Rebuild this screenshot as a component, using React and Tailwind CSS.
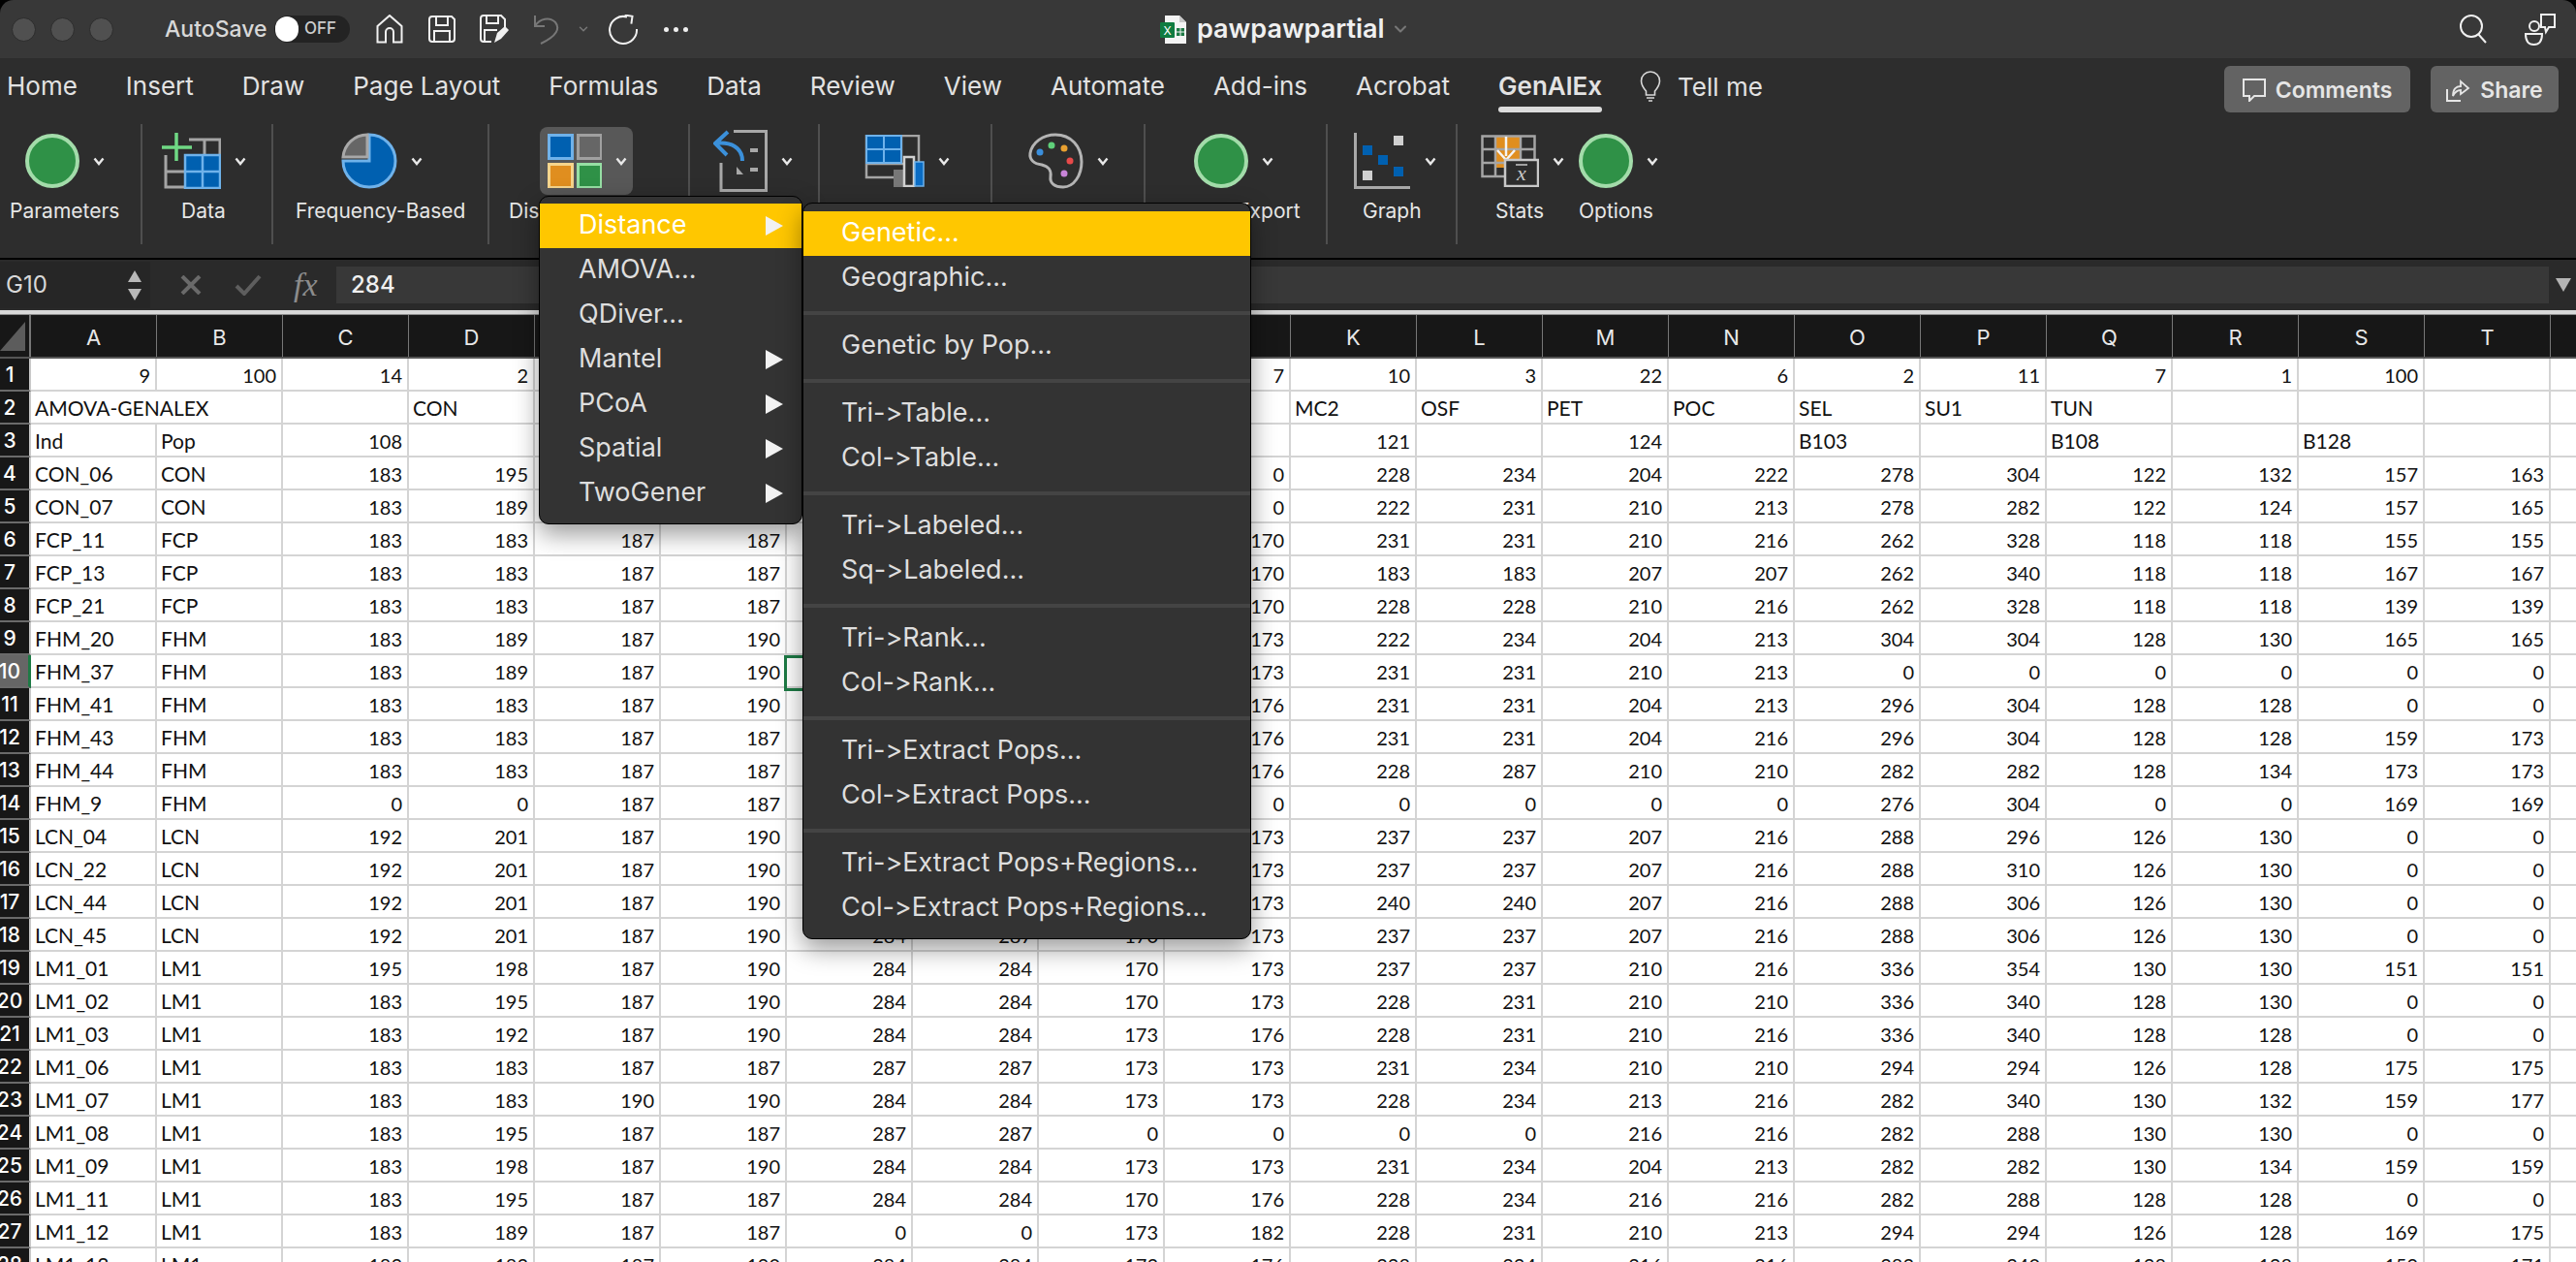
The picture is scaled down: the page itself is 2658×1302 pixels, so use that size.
import React from 'react';
import { ChevronDown } from 'lucide-react';

const tabs = ['Home', 'Insert', 'Draw', 'Page Layout', 'Formulas', 'Data', 'Review', 'View', 'Automate', 'Add-ins', 'Acrobat', 'GenAlEx'];
const columns = 'ABCDEFGHIJKLMNOPQRST'.split('');

// "-" is an empty cell; cells under the two menus are left empty
const sheet = [
  '9 100 14 2 - - - - - 7 10 3 22 6 2 11 7 1 100 -',
  'AMOVA-GENALEX - - CON - - - - - - MC2 OSF PET POC SEL SU1 TUN - - -',
  'Ind Pop 108 - - - - - - - 121 - 124 - B103 - B108 - B128 -',
  'CON_06 CON 183 195 - - - - - 0 228 234 204 222 278 304 122 132 157 163',
  'CON_07 CON 183 189 - - - - - 0 222 231 210 213 278 282 122 124 157 165',
  'FCP_11 FCP 183 183 187 187 - - - 170 231 231 210 216 262 328 118 118 155 155',
  'FCP_13 FCP 183 183 187 187 - - - 170 183 183 207 207 262 340 118 118 167 167',
  'FCP_21 FCP 183 183 187 187 - - - 170 228 228 210 216 262 328 118 118 139 139',
  'FHM_20 FHM 183 189 187 190 - - - 173 222 234 204 213 304 304 128 130 165 165',
  'FHM_37 FHM 183 189 187 190 284 - - 173 231 231 210 213 0 0 0 0 0 0',
  'FHM_41 FHM 183 183 187 190 - - - 176 231 231 204 213 296 304 128 128 0 0',
  'FHM_43 FHM 183 183 187 187 - - - 176 231 231 204 216 296 304 128 128 159 173',
  'FHM_44 FHM 183 183 187 187 - - - 176 228 287 210 210 282 282 128 134 173 173',
  'FHM_9 FHM 0 0 187 187 - - - 0 0 0 0 0 276 304 0 0 169 169',
  'LCN_04 LCN 192 201 187 190 - - - 173 237 237 207 216 288 296 126 130 0 0',
  'LCN_22 LCN 192 201 187 190 - - - 173 237 237 207 216 288 310 126 130 0 0',
  'LCN_44 LCN 192 201 187 190 - - - 173 240 240 207 216 288 306 126 130 0 0',
  'LCN_45 LCN 192 201 187 190 284 287 170 173 237 237 207 216 288 306 126 130 0 0',
  'LM1_01 LM1 195 198 187 190 284 284 170 173 237 237 210 216 336 354 130 130 151 151',
  'LM1_02 LM1 183 195 187 190 284 284 170 173 228 231 210 210 336 340 128 130 0 0',
  'LM1_03 LM1 183 192 187 190 284 284 173 176 228 231 210 216 336 340 128 128 0 0',
  'LM1_06 LM1 183 183 187 187 287 287 173 173 231 234 210 210 294 294 126 128 175 175',
  'LM1_07 LM1 183 183 190 190 284 284 173 173 228 234 213 216 282 340 130 132 159 177',
  'LM1_08 LM1 183 195 187 187 287 287 0 0 0 0 216 216 282 288 130 130 0 0',
  'LM1_09 LM1 183 198 187 190 284 284 173 173 231 234 204 213 282 282 130 134 159 159',
  'LM1_11 LM1 183 195 187 187 284 284 170 176 228 234 216 216 282 288 128 128 0 0',
  'LM1_12 LM1 183 189 187 187 0 0 173 182 228 231 210 213 294 294 126 128 169 175',
  'LM1_13 LM1 183 183 187 190 284 284 173 176 228 234 216 216 282 340 128 128 159 171',
].map(row => row.split(' '));

const firstMenu = [
  { label: 'Distance', arrow: true, active: true },
  { label: 'AMOVA...' },
  { label: 'QDiver...' },
  { label: 'Mantel', arrow: true },
  { label: 'PCoA', arrow: true },
  { label: 'Spatial', arrow: true },
  { label: 'TwoGener', arrow: true },
];

const secondMenu = [
  ['Genetic...', 'Geographic...'],
  ['Genetic by Pop...'],
  ['Tri->Table...', 'Col->Table...'],
  ['Tri->Labeled...', 'Sq->Labeled...'],
  ['Tri->Rank...', 'Col->Rank...'],
  ['Tri->Extract Pops...', 'Col->Extract Pops...'],
  ['Tri->Extract Pops+Regions...', 'Col->Extract Pops+Regions...'],
];

const Chevron = () => (
  <svg width="12" height="9" viewBox="0 0 12 9" className="shrink-0">
    <path d="M1.5 1.5 L6 7 L10.5 1.5" fill="none" stroke="#e8e8e8" strokeWidth="2.4" />
  </svg>
);

const GreenDot = () => (
  <svg width="56" height="56" viewBox="0 0 56 56">
    <circle cx="28" cy="28" r="26" fill="#2f9147" stroke="#a3dcaa" strokeWidth="4" />
  </svg>
);

const DataIcon = () => (
  <svg width="61" height="58" viewBox="0 0 61 58">
    <path d="M4 23V56H60V7H28" fill="none" stroke="#a5a5a5" strokeWidth="3" />
    <path d="M4 40H24M44 7V23" stroke="#a5a5a5" strokeWidth="3" />
    <rect x="24" y="23" width="36" height="34" fill="#0060b0" stroke="#6fb2ea" strokeWidth="2.5" />
    <path d="M42 23V57M24 40H60" stroke="#6fb2ea" strokeWidth="2.5" />
    <path d="M15 0V29M0 15H31" stroke="#6fd884" strokeWidth="3.5" />
  </svg>
);

const PieIcon = () => (
  <svg width="58" height="58" viewBox="0 0 58 58">
    <path d="M29 2A27 27 0 1 1 2 29H29Z" fill="#0060b0" stroke="#6fb2ea" strokeWidth="3" />
    <path d="M2 25A25 25 0 0 1 27 2V25Z" fill="#666666" stroke="#a8a8a8" strokeWidth="3" />
  </svg>
);

const QuadIcon = () => (
  <svg width="56" height="56" viewBox="0 0 56 56">
    <rect x="1.5" y="1.5" width="24" height="24" fill="#0060b0" stroke="#6fb2ea" strokeWidth="3" />
    <rect x="31.5" y="1.5" width="24" height="24" fill="#666666" stroke="#a0a0a0" strokeWidth="3" />
    <rect x="1.5" y="31.5" width="24" height="24" fill="#e08e1f" stroke="#f6d58c" strokeWidth="3" />
    <rect x="31.5" y="31.5" width="24" height="24" fill="#2f9147" stroke="#96dfa4" strokeWidth="3" />
  </svg>
);

const ImportIcon = () => (
  <svg width="56" height="64" viewBox="0 0 56 64">
    <path d="M21 1.5H54.5V62.5H8V34" fill="none" stroke="#a8a8a8" strokeWidth="3" />
    <path d="M38 21H46M38 41H46" stroke="#a8a8a8" strokeWidth="4" />
    <path d="M24 46V38L31 46Z" fill="#a8a8a8" />
    <path d="M15 2L2 14L14 26M2 14C18 12 30 18 30 32" fill="none" stroke="#3b90da" strokeWidth="4" />
  </svg>
);

const TableBarsIcon = () => (
  <svg width="62" height="54" viewBox="0 0 62 54">
    <path d="M2 1H56V44H2Z" fill="none" stroke="#a5a5a5" strokeWidth="2.5" />
    <path d="M2 30H40M38 1V30" stroke="#a5a5a5" strokeWidth="2.5" />
    <rect x="2" y="1" width="36" height="28" fill="#0060b0" stroke="#6fb2ea" strokeWidth="2" />
    <path d="M20 1V29M2 15H38" stroke="#6fb2ea" strokeWidth="2" />
    <rect x="30" y="36" width="11" height="18" fill="#777777" />
    <rect x="41" y="23" width="10" height="30" fill="#2d2d2d" stroke="#d0d0d0" strokeWidth="2.5" />
    <rect x="52" y="28" width="9" height="25" fill="#0a6cc4" stroke="#6fb2ea" strokeWidth="1.5" />
  </svg>
);

const PaletteIcon = () => (
  <svg width="58" height="58" viewBox="0 0 58 58">
    <path d="M29 2C45 2 56 14 56 30C56 44 48 56 37 56C28 56 23 52 24 45C25 38 22 35 15 33C7 32 2 28 3 21C5 10 16 2 29 2Z" fill="none" stroke="#b4b4b4" strokeWidth="3" />
    <circle cx="13" cy="20" r="3.5" fill="#3b8fdc" />
    <circle cx="25" cy="13" r="3.5" fill="#5fd07a" />
    <circle cx="38" cy="16" r="3.5" fill="#e8a030" />
    <circle cx="44" cy="29" r="3.5" fill="#e84a4a" />
    <circle cx="38" cy="42" r="3.5" fill="#c884d8" />
  </svg>
);

const GraphIcon = () => (
  <svg width="59" height="58" viewBox="0 0 59 58">
    <path d="M1.5 0V56.5H58" fill="none" stroke="#a8a8a8" strokeWidth="3" />
    <rect x="41" y="3" width="10" height="10" fill="#d0d0d0" />
    <rect x="9" y="13" width="10" height="10" fill="#0060b0" />
    <rect x="25" y="23" width="10" height="10" fill="#0060b0" />
    <rect x="41" y="35" width="10" height="10" fill="#0060b0" />
    <rect x="9" y="39" width="10" height="10" fill="#d0d0d0" />
  </svg>
);

const StatsIcon = () => (
  <svg width="60" height="54" viewBox="0 0 60 54">
    <rect x="15" y="1" width="26" height="33" fill="#e08e1f" />
    <path d="M1.5 1.5H55.5V43H1.5ZM15 1.5V43M41 1.5V30M1.5 15H55M1.5 29H24" fill="none" stroke="#a5a5a5" strokeWidth="2.5" />
    <path d="M26 2V22M17 16L26 26L35 16" fill="none" stroke="#f4f4f4" strokeWidth="2.5" />
    <rect x="25" y="26" width="34" height="27" fill="#2d2d2d" stroke="#c8c8c8" strokeWidth="2.5" />
    <text x="42" y="47" textAnchor="middle" fontFamily="'Liberation Serif', serif" fontStyle="italic" fontSize="22" fill="#c8c8c8">x</text>
    <path d="M36 31H48" stroke="#c8c8c8" strokeWidth="1.5" />
  </svg>
);

const ExcelIcon = () => (
  <svg width="27" height="31" viewBox="0 0 27 31">
    <path d="M5 1H20L27 8V30H5Z" fill="#f4f4f4" />
    <path d="M20 1V8H27Z" fill="#c8c8c8" />
    <rect x="17" y="14" width="8" height="8" fill="#1d7a45" />
    <path d="M21 14V22M17 18H25" stroke="#f4f4f4" strokeWidth="1" />
    <rect x="0" y="8" width="15" height="16" rx="1" fill="#107c41" />
    <text x="7.5" y="21" textAnchor="middle" fontFamily="Inter, sans-serif" fontSize="12" fill="#ffffff">X</text>
  </svg>
);

// ribbon group, the classes place the icon and the label inside the group
const RibbonGroup = ({ width, iconPad, labelClass, label, icon, highlight, noChevron, border = true }) => (
  <div className={`${width} h-[124px] shrink-0 flex flex-col ${border ? 'border-r-2 border-[#4f4f4f]' : ''}`}>
    <div className={`h-[76px] flex items-center ${iconPad}`}>
      <div className={`flex items-center h-[70px] ${highlight ? 'bg-[#585858] rounded-lg pl-[8px] pr-[6px]' : ''}`}>
        {icon}
        {!noChevron && <div className="ml-[14px]"><Chevron /></div>}
      </div>
    </div>
    <div className={`h-[28px] leading-[28px] text-[21px] text-[#e6e6e6] whitespace-nowrap ${labelClass}`}>{label}</div>
  </div>
);

const MenuArrow = () => (
  <svg width="18" height="20" viewBox="0 0 18 20">
    <path d="M0 0L18 10L0 20Z" fill="#f2f2f2" />
  </svg>
);

const MenuItem = ({ label, arrow, active, pad }) => (
  <div className={`h-[46px] flex items-center justify-between ${pad} pr-[19px] text-[27px] [font-feature-settings:'calt'_0,'liga'_0] ${active ? 'bg-[#ffc700] text-white' : 'text-[#dedede]'}`}>
    <span className="whitespace-nowrap -mt-[1px]">{label}</span>
    {arrow && <MenuArrow />}
  </div>
);

const isNumber = (v) => /^\d+$/.test(v);

const Sheet = () => (
  <div className="flex-1 overflow-hidden bg-white font-[Lato,sans-serif]">
    <div className="flex h-[45px] bg-[#171717] border-b-2 border-[#555555]">
      <div className="w-[32px] shrink-0 flex items-end justify-start pb-[6px] border-r-2 border-[#777777]">
        <svg width="26" height="30" viewBox="0 0 26 30"><path d="M26 0V30H0Z" fill="#5c5c5c" /></svg>
      </div>
      {columns.map(col => (
        <div key={col} className="w-[130px] shrink-0 flex items-center justify-center pt-[3px] border-r border-[#777777] text-[22px] text-[#e8e8e8] font-[Inter,sans-serif]">
          {col}
        </div>
      ))}
      <div className="flex-1" />
    </div>
    {sheet.map((row, r) => (
      <div key={r} className="flex h-[34px]">
        <div className={`w-[32px] shrink-0 border-b-2 border-[#6a6a6a] text-[21px] leading-[33px] text-white font-[Inter,sans-serif] font-medium ${r === 9 ? 'bg-[#666666] border-r-[3px] border-r-[#1d7a45]' : 'bg-[#171717] border-r-2 border-r-[#c8c8c8]'}`}>
          <div className="w-[20px] flex justify-center">{r + 1}</div>
        </div>
        {row.map((cell, c) => (
          <div
            key={c}
            className={`w-[130px] shrink-0 border-b-2 border-[#d4d4d4] whitespace-nowrap leading-[34px] text-[#111111] ${r === 1 && c === 0 ? '' : 'border-r-2'} ${isNumber(cell) ? 'text-[20px] text-right pr-[5px]' : 'text-[21px] text-left pl-[4px]'}`}
          >
            {cell === '-' ? '' : cell}
          </div>
        ))}
        <div className="flex-1 border-b-2 border-[#d4d4d4]" />
      </div>
    ))}
  </div>
);

export default function App() {
  return (
    <div className="relative w-[2658px] h-[1302px] overflow-hidden bg-black flex flex-col font-[Inter,sans-serif]">
      {/* title bar */}
      <div className="h-[60px] shrink-0 rounded-t-[14px] bg-[#383838] flex items-center pl-[12px]">
        <div className="flex items-center gap-[15px]">
          <div className="w-[25px] h-[25px] rounded-full bg-[#505050] border border-[#2c2c2c]" />
          <div className="w-[25px] h-[25px] rounded-full bg-[#505050] border border-[#2c2c2c]" />
          <div className="w-[25px] h-[25px] rounded-full bg-[#505050] border border-[#2c2c2c]" />
        </div>
        <span className="ml-[53px] w-[105px] text-[23px] text-[#d8d8d8] font-medium">AutoSave</span>
        <div className="ml-[8px] w-[78px] h-[28px] rounded-full bg-[#232323] flex items-center">
          <div className="ml-[1px] w-[24px] h-[26px] rounded-full bg-white" />
          <span className="ml-[6px] text-[17px] text-[#cccccc] font-medium">OFF</span>
        </div>
        <svg className="ml-[27px]" width="28" height="30" viewBox="0 0 28 30">
          <path d="M14 1L1.5 12V28.5H10V18A4 4 0 0 1 18 18V28.5H26.5V12Z" fill="none" stroke="#f0f0f0" strokeWidth="2" />
        </svg>
        <svg className="ml-[26px]" width="28" height="28" viewBox="0 0 28 28">
          <path d="M4 1H24L27 4V24Q27 27 24 27H4Q1 27 1 24V4Q1 1 4 1ZM8 1V10H20V1M6 27V16H22V27" fill="none" stroke="#f0f0f0" strokeWidth="2" />
        </svg>
        <svg className="ml-[25px]" width="30" height="30" viewBox="0 0 30 30">
          <path d="M12 28H4Q1 28 1 25V4Q1 1 4 1H22L26 5V13M7 1V9H19V1M5 28V16H18" fill="none" stroke="#f0f0f0" strokeWidth="2" />
          <path d="M15 29L18 19L26 12L30 16L22 25Z" fill="#f0f0f0" />
        </svg>
        <svg className="ml-[26px]" width="26" height="31" viewBox="0 0 26 31">
          <path d="M1 1V12H11M1 12C6 4 16 2 22 8C27 14 24 22 7 30" fill="none" stroke="#777777" strokeWidth="2" />
        </svg>
        <ChevronDown className="ml-[18px] text-[#777777]" size={14} strokeWidth={2.5} />
        <svg className="ml-[18px]" width="32" height="31" viewBox="0 0 32 31">
          <path d="M20 2.5A14 14 0 1 0 30 15" fill="none" stroke="#f0f0f0" strokeWidth="2" />
          <path d="M17 1H25V9" fill="none" stroke="#f0f0f0" strokeWidth="2" transform="rotate(8 20 5)" />
        </svg>
        <div className="ml-[26px] flex gap-[5px]">
          <div className="w-[5px] h-[5px] rounded-full bg-[#f0f0f0]" />
          <div className="w-[5px] h-[5px] rounded-full bg-[#f0f0f0]" />
          <div className="w-[5px] h-[5px] rounded-full bg-[#f0f0f0]" />
        </div>
        <div className="ml-[487px]"><ExcelIcon /></div>
        <span className="ml-[11px] text-[27px] font-semibold text-[#f0f0f0]">pawpawpartial</span>
        <ChevronDown className="ml-[6px] text-[#777777]" size={20} strokeWidth={2.5} />
        <svg className="ml-auto" width="28" height="30" viewBox="0 0 28 30">
          <circle cx="12" cy="12" r="11" fill="none" stroke="#f0f0f0" strokeWidth="2" />
          <path d="M19 20L27 29" stroke="#f0f0f0" strokeWidth="2" />
        </svg>
        <svg className="ml-[38px] mr-[21px]" width="33" height="33" viewBox="0 0 33 33">
          <circle cx="11" cy="13" r="5" fill="none" stroke="#f0f0f0" strokeWidth="2" />
          <path d="M2 21H19C19 28 16 32 10.5 32C5 32 2 28 2 21Z" fill="none" stroke="#f0f0f0" strokeWidth="2" />
          <path d="M18 1H32V14H26L23 19L22 14H18Z" fill="none" stroke="#f0f0f0" strokeWidth="2" />
        </svg>
      </div>

      {/* tabs */}
      <div className="h-[65px] shrink-0 bg-[#2d2d2d] flex items-start pl-[7px] pt-[13px] text-[26px] text-[#e2e2e2] gap-[50px]">
        {tabs.map(tab => (
          <div key={tab} className="flex flex-col">
            <span className={`h-[32px] leading-[32px] whitespace-nowrap ${tab === 'GenAlEx' ? 'font-semibold' : ''}`}>{tab}</span>
            {tab === 'GenAlEx' && <div className="mt-[5px] h-[6px] rounded-full bg-[#dcdcdc]" />}
          </div>
        ))}
        <div className="flex items-center gap-[17px] h-[32px] -ml-[11px]">
          <svg width="22" height="32" viewBox="0 0 22 32">
            <path d="M6.5 21C3 17 1.5 14 1.5 10.5A9.5 9.5 0 0 1 20.5 10.5C20.5 14 19 17 15.5 21V25H6.5ZM7 28H15M9 31H13" fill="none" stroke="#d8d8d8" strokeWidth="1.6" />
          </svg>
          <span>Tell me</span>
        </div>
        <div className="ml-auto mr-[18px] -mt-[5px] flex gap-[21px] text-[23px] font-semibold text-[#e6e6e6]">
          <div className="h-[48px] w-[192px] bg-[#636363] rounded-md flex items-center justify-center gap-[10px] pt-[2px]">
            <svg width="24" height="24" viewBox="0 0 24 24">
              <path d="M1 1H23V18H12L7 23V18H1Z" fill="none" stroke="#e6e6e6" strokeWidth="2" />
            </svg>
            Comments
          </div>
          <div className="h-[48px] w-[132px] bg-[#636363] rounded-md flex items-center justify-center gap-[10px] pt-[2px]">
            <svg width="25" height="24" viewBox="0 0 25 24">
              <path d="M1 11V23H15" fill="none" stroke="#e6e6e6" strokeWidth="2" />
              <path d="M7 18C7 11 10 8 15 8V3L23 10L15 16V12C11 12 9 14 7 18Z" fill="none" stroke="#e6e6e6" strokeWidth="1.8" />
            </svg>
            Share
          </div>
        </div>
      </div>

      {/* ribbon */}
      <div className="h-[143px] shrink-0 bg-[#2d2d2d] flex items-start pt-[3px] border-b-2 border-black">
        <RibbonGroup width="w-[147px]" iconPad="pl-[26px]" labelClass="pl-[10px]" label="Parameters" icon={<GreenDot />} />
        <RibbonGroup width="w-[135px]" iconPad="pl-[20px]" labelClass="pl-[40px]" label="Data" icon={<DataIcon />} />
        <RibbonGroup width="w-[223px]" iconPad="pl-[70px]" labelClass="pl-[23px]" label="Frequency-Based" icon={<PieIcon />} />
        <RibbonGroup width="w-[207px]" iconPad="pl-[52px]" labelClass="pl-[20px]" label="Distance-Based" icon={<QuadIcon />} highlight />
        <RibbonGroup width="w-[134px]" iconPad="pl-[24px]" labelClass="" label="" icon={<ImportIcon />} />
        <RibbonGroup width="w-[178px]" iconPad="pl-[46px]" labelClass="" label="" icon={<TableBarsIcon />} />
        <RibbonGroup width="w-[158px]" iconPad="pl-[36px]" labelClass="" label="" icon={<PaletteIcon />} />
        <RibbonGroup width="w-[188px]" iconPad="pl-[50px]" labelClass="pl-[95px]" label="Export" icon={<GreenDot />} />
        <RibbonGroup width="w-[134px]" iconPad="pl-[27px]" labelClass="pl-[36px]" label="Graph" icon={<GraphIcon />} />
        <RibbonGroup width="w-[125px]" iconPad="pl-[24px]" labelClass="pl-[39px]" label="Stats" icon={<StatsIcon />} border={false} />
        <RibbonGroup width="w-[110px]" iconPad="" labelClass="" label="Options" icon={<GreenDot />} border={false} />
      </div>

      {/* formula bar */}
      <div className="h-[52px] shrink-0 bg-[#2a2a2a] flex items-center">
        <div className="w-[155px] h-[48px] bg-[#262626] flex items-center justify-between pl-[6px] pr-[9px] text-[24px] text-[#d8d8d8]">
          G10
          <div className="flex flex-col gap-[7px]">
            <svg width="14" height="12" viewBox="0 0 14 12"><path d="M7 0L14 12H0Z" fill="#b8b8b8" /></svg>
            <svg width="14" height="12" viewBox="0 0 14 12"><path d="M7 12L14 0H0Z" fill="#b8b8b8" /></svg>
          </div>
        </div>
        <svg className="ml-[31px]" width="22" height="20" viewBox="0 0 22 20">
          <path d="M2 1L20 19M20 1L2 19" stroke="#6a6a6a" strokeWidth="4" />
        </svg>
        <svg className="ml-[34px]" width="28" height="22" viewBox="0 0 28 22">
          <path d="M2 12L10 20L26 2" fill="none" stroke="#5e5e5e" strokeWidth="4" />
        </svg>
        <span className="ml-[33px] w-[43px] text-[34px] leading-none italic text-[#8c8c8c] font-['Liberation_Serif',serif]">fx</span>
        <div className="ml-[1px] w-[2283px] h-[38px] bg-[#383838] flex items-center pl-[15px] text-[24px] text-[#f0f0f0] font-medium">284</div>
        <svg className="ml-[7px]" width="16" height="14" viewBox="0 0 16 14"><path d="M0 0H16L8 14Z" fill="#b4b4b4" /></svg>
      </div>
      <div className="h-[5px] shrink-0 bg-[#d8d8d8] border-b border-[#8a8a8a]" />

      <Sheet />

      {/* selected cell G10, mostly under the submenu */}
      <div className="absolute left-[809px] top-[676px] w-[134px] h-[37px] border-[3px] border-[#1d7a45]" />

      {/* GenAlEx menu */}
      <div className="absolute left-[556px] top-[202px] w-[272px] h-[339px] pt-[7px] bg-[#333333] border border-black rounded-[10px] shadow-[0_10px_26px_rgba(0,0,0,0.4)]">
        {firstMenu.map(item => (
          <MenuItem key={item.label} {...item} pad="pl-[40px]" />
        ))}
      </div>

      {/* Distance submenu */}
      <div className="absolute left-[828px] top-[209px] w-[463px] h-[760px] pt-[8px] bg-[#333333] border border-black rounded-[10px] shadow-[0_10px_26px_rgba(0,0,0,0.4)]">
        {secondMenu.map((group, i) => (
          <div key={i}>
            {i > 0 && <div className="mt-[11px] mb-[9px] h-[4px] bg-[#444444]" />}
            {group.map(label => (
              <MenuItem key={label} label={label} active={label === 'Genetic...'} pad="pl-[39px]" />
            ))}
          </div>
        ))}
      </div>
    </div>
  );
}
